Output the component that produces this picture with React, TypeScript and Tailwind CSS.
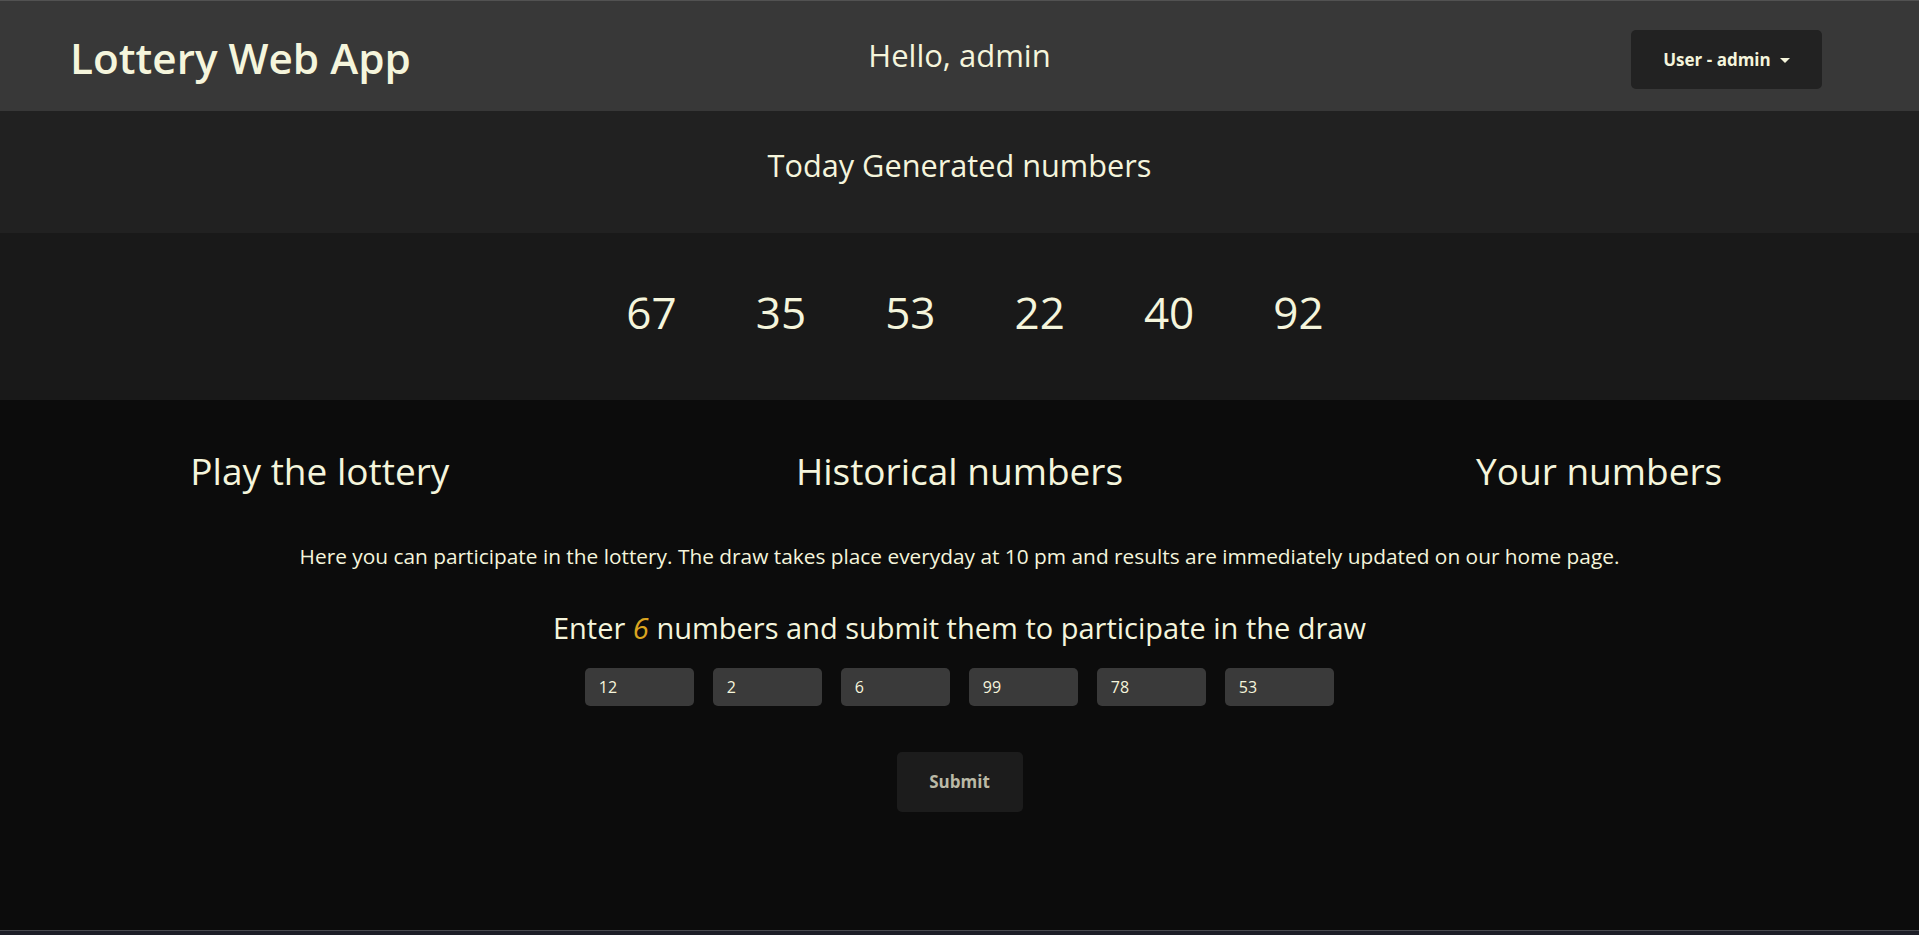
import React, { useState } from "react";

const todayNumbers = [67, 35, 53, 22, 40, 92];
const tabs = ["Play the lottery", "Historical numbers", "Your numbers"];

const App: React.FC = () => {
  const [picks, setPicks] = useState<string[]>(["12", "2", "6", "99", "78", "53"]);

  const updatePick = (i: number, value: string) => {
    setPicks(picks.map((p, idx) => (idx === i ? value : p)));
  };

  return (
    <div
      className="min-h-[935px] bg-[#1d1e27] text-[#f5f5dc]"
      style={{ fontFamily: '"Open Sans", "Noto Sans", sans-serif' }}
    >
      {/* Navbar */}
      <header className="h-[111px] bg-[#383838] border-t border-[#525252] grid grid-cols-3 items-center">
        <div className="pl-[70px] text-[42.3px] font-semibold leading-none pt-[4px]">Lottery Web App</div>
        <div className="text-center text-[31px] leading-none pb-[1px]">Hello, admin</div>
        <div className="flex justify-end pr-[97px] pt-[7px]">
          <button className="h-[59px] w-[191px] rounded-[5px] bg-[#222222] flex items-center justify-center gap-[9px] text-[17px] font-bold text-[#f5f5dc]">
            User - admin
            <span className="w-0 h-0 border-l-[5px] border-r-[5px] border-t-[5px] border-l-transparent border-r-transparent border-t-[#f5f5dc] mt-[1px]" />
          </button>
        </div>
      </header>

      {/* Today title */}
      <div className="h-[122px] bg-[#212121] flex items-center justify-center">
        <h2 className="text-[30.7px] leading-none pb-[14px]">Today Generated numbers</h2>
      </div>

      {/* Today numbers */}
      <div className="h-[167px] bg-[#191919] flex items-center justify-center pl-[31px]">
        {todayNumbers.map((n) => (
          <span key={n} className="w-[129.4px] text-center text-[44px] leading-none pb-[9px]">
            {n}
          </span>
        ))}
      </div>

      {/* Main area */}
      <main className="h-[531px] bg-[#0c0c0c] border-b border-[#47484e]">
        <nav className="grid grid-cols-3 pt-[47px]">
          {tabs.map((t) => (
            <div key={t} className="text-center text-[37px] leading-[48px]">
              {t}
            </div>
          ))}
        </nav>

        <p className="text-center text-[20.85px] mt-[47px] leading-[28px]">
          Here you can participate in the lottery. The draw takes place everyday at 10 pm and results are immediately updated on our home page.
        </p>

        <h3 className="text-center text-[29px] leading-[36px] mt-[40px]">
          Enter <span className="italic text-[#daa520]">6</span> numbers and submit them to participate in the draw
        </h3>

        <div className="flex justify-center gap-[18.5px] mt-[22px]">
          {picks.map((p, i) => (
            <input
              key={i}
              value={p}
              onChange={(e) => updatePick(i, e.target.value)}
              className="w-[109.5px] h-[38px] rounded-[5px] bg-[#3a3a3a] pl-[14px] text-[16px] text-[#f5f5dc] outline-none"
            />
          ))}
        </div>

        <div className="flex justify-center mt-[46px]">
          <button className="w-[126px] h-[60px] rounded-[5px] bg-[#1c1c1c] text-[17px] font-bold text-[#bab9a6]">
            Submit
          </button>
        </div>
      </main>
    </div>
  );
};

export default App;
